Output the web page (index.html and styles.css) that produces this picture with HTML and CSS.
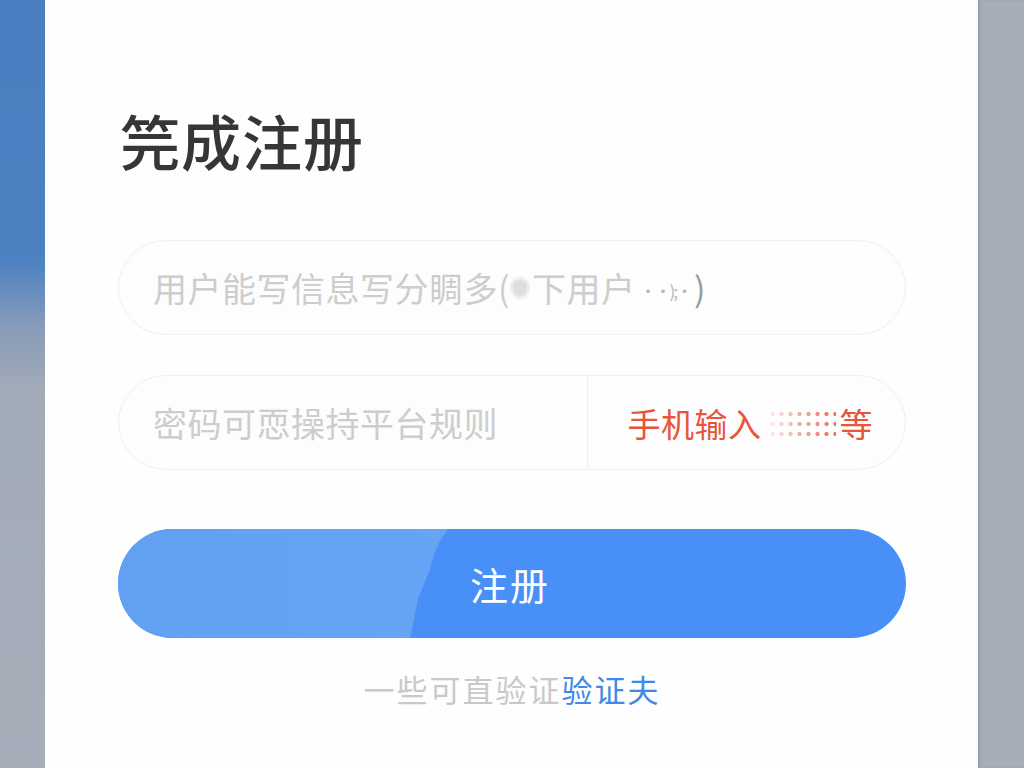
FILE: index.html
```html
<!DOCTYPE html>
<html lang="zh-CN">
<head>
<meta charset="utf-8">
<title>笎成注册</title>
<link rel="stylesheet" href="styles.css">
</head>
<body>
<div class="page">
  <div class="side side-left"></div>
  <main class="card">
    <h1 class="title">笎成注册</h1>
    <div class="field">
      <span class="ph">用户能写信息写分睭多(<span class="dot"></span>下用户 <span class="tiny">··);·</span><span class="paren">)</span></span>
    </div>
    <div class="field field-split">
      <span class="ph ph-left">密码可恧操持平台规则</span>
      <span class="divider"></span>
      <span class="sms">手机输入<span class="dots"></span>等</span>
    </div>
    <button class="btn" type="button"><span class="btn-label">注册</span></button>
    <p class="foot">一些可直验证<span class="link">验证夫</span></p>
  </main>
  <div class="side side-right"></div>
</div>
</body>
</html>
```
FILE: styles.css
```css
* { box-sizing: border-box; }
html, body { margin: 0; padding: 0; }
body {
  width: 1024px;
  height: 768px;
  overflow: hidden;
  font-family: "Noto Sans CJK SC", "Noto Sans", sans-serif;
  background: #fefefe;
}
.page {
  display: grid;
  grid-template-columns: 45px 1fr 46px;
  height: 768px;
}
.side-left {
  background: linear-gradient(180deg, #4a7ec0 0px, #4c81c2 260px, #8a9cb8 330px, #a2abb8 390px, #a6aeba 768px);
}
.side-right {
  background: #a5adb9;
  box-shadow: inset 2px 0 2px rgba(120,130,145,0.35);
}
.card {
  background: #fefefe;
  padding: 108px 72px 0 73px;
  display: flex;
  flex-direction: column;
}
.title {
  margin: 0 0 0 2px;
  font-size: 60px;
  line-height: 64px;
  font-weight: 500;
  letter-spacing: 1px;
  color: #363636;
}
.field {
  height: 95px;
  border: 1.5px solid #efefef;
  border-radius: 48px;
  background: #fdfdfd;
  display: flex;
  align-items: center;
  padding-left: 34px;
  margin-top: 68px;
}
.field-split {
  margin-top: 40px;
  padding-left: 34px;
  padding-right: 0;
}
.ph {
  font-size: 34px;
  letter-spacing: 0.5px;
  color: #cdcdcd;
  display: flex;
  align-items: center;
  white-space: nowrap;
}
.dot {
  display: inline-block;
  width: 20px;
  height: 22px;
  border-radius: 50%;
  background: #dedede;
  border: 3px solid #ededed;
  margin: 0 2px 0 0;
}
.tiny {
  font-size: 17px;
  color: #b8b8b8;
  margin: 6px 3px 0 4px;
  letter-spacing: -2px;
}
.paren { color: #9b9b9b; }
.ph-left { width: 434px; }
.divider {
  align-self: stretch;
  width: 1px;
  background: #eeeeee;
}
.sms {
  flex: 1;
  display: flex;
  align-items: center;
  justify-content: flex-end;
  padding-right: 32px;
  font-size: 33px;
  color: #e6553c;
  letter-spacing: 0.5px;
}
.dots {
  display: inline-block;
  width: 68px;
  height: 28px;
  margin: 0 4px 0 6px;
  background-image: radial-gradient(circle, #e66550 1.9px, transparent 2.3px);
  background-size: 9px 10px;
  background-position: 0 0;
  -webkit-mask-image: linear-gradient(90deg, rgba(0,0,0,0.08), rgba(0,0,0,0.5) 45%, rgba(0,0,0,0.9));
  mask-image: linear-gradient(90deg, rgba(0,0,0,0.08), rgba(0,0,0,0.5) 45%, rgba(0,0,0,0.9));
}
.btn {
  position: relative;
  margin-top: 59px;
  height: 109px;
  border: none;
  border-radius: 55px;
  background: #4890f7;
  overflow: hidden;
  font-family: inherit;
  padding: 0;
  display: flex;
  align-items: center;
  justify-content: center;
}
.btn::before {
  content: "";
  position: absolute;
  left: 0; top: 0; bottom: 0;
  width: 340px;
  background: linear-gradient(90deg, #62a0f2, #66a4f5);
  clip-path: polygon(0 0, 330px 0, 322px 12px, 316px 25px, 312px 40px, 306px 55px, 300px 70px, 297px 85px, 294px 100px, 292px 109px, 0 109px);
}
.btn-label {
  position: relative;
  font-size: 38px;
  color: #ffffff;
  letter-spacing: 2px;
  margin-left: -4px;
}
.foot {
  margin: 28px 0 0;
  text-align: center;
  font-size: 31px;
  letter-spacing: 2px;
  color: #c9c9c9;
}
.link { color: #3f8ae8; }
```
